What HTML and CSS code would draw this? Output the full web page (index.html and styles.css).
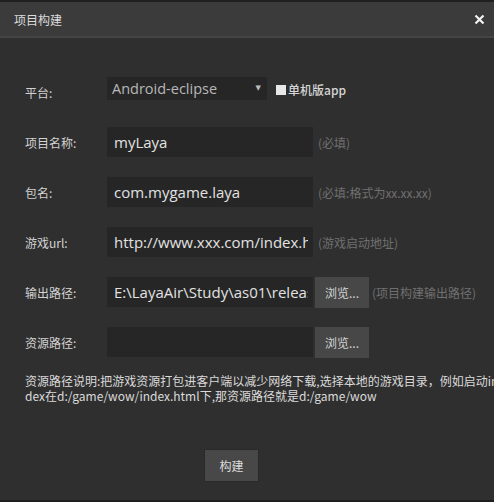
FILE: index.html
```html
<!DOCTYPE html>
<html lang="zh">
<head>
<meta charset="utf-8">
<link rel="stylesheet" href="styles.css">
</head>
<body>
<div class="dialog">
  <div class="titlebar">
    <span class="title">项目构建</span>
    <svg class="close" width="11" height="11" viewBox="0 0 11 11"><path d="M1.5 1.5 L9.5 9.5 M9.5 1.5 L1.5 9.5" stroke="#f2f2f2" stroke-width="2.2" fill="none"/></svg>
  </div>
  <div class="content">
    <div class="row">
      <label class="label">平台:</label>
      <div class="select">Android-eclipse<span class="arrow">▼</span></div>
      <div class="check"><span class="box"></span>单机版app</div>
    </div>
    <div class="row">
      <label class="label">项目名称:</label>
      <div class="input"><span class="val">myLaya</span></div>
      <span class="hint">(必填)</span>
    </div>
    <div class="row">
      <label class="label">包名:</label>
      <div class="input"><span class="val">com.mygame.laya</span></div>
      <span class="hint">(必填:格式为xx.xx.xx)</span>
    </div>
    <div class="row">
      <label class="label">游戏url:</label>
      <div class="input"><span class="val">http://www.xxx.com/index.html</span></div>
      <span class="hint">(游戏启动地址)</span>
    </div>
    <div class="row">
      <label class="label">输出路径:</label>
      <div class="input"><span class="val">E:\LayaAir\Study\as01\release</span></div>
      <button class="browse">浏览...</button>
      <span class="hint hint-after">(项目构建输出路径)</span>
    </div>
    <div class="row">
      <label class="label">资源路径:</label>
      <div class="input"><span class="val"></span></div>
      <button class="browse">浏览...</button>
    </div>
    <p class="desc">资源路径说明:把游戏资源打包进客户端以减少网络下载,选择本地的游戏目录，例如启动in<br>dex在d:/game/wow/index.html下,那资源路径就是d:/game/wow</p>
    <div class="actions">
      <button class="build">构建</button>
    </div>
  </div>
</div>
</body>
</html>
```

FILE: styles.css
```css
html, body {
  margin: 0;
  padding: 0;
  background: #2f2f2f;
  overflow: hidden;
}
body {
  width: 494px;
  height: 502px;
  font-family: "Open Sans", "Noto Sans CJK SC", sans-serif;
}
.dialog {
  width: 494px;
  height: 502px;
  box-sizing: border-box;
  border-top: 2px solid #1f1f1f;
  border-bottom: 2px solid #1e1e1e;
  background: #2f2f2f;
  overflow: hidden;
}
.titlebar {
  height: 34px;
  background: #3b3b3b;
  border-bottom: 2px solid #444444;
  display: flex;
  align-items: center;
  justify-content: space-between;
  padding: 0 9px 0 14px;
}
.title {
  font-family: "Noto Sans CJK SC", sans-serif;
  font-size: 12px;
  color: #dcdcdc;
}
.close {
  display: block;
}
.content {
  padding: 39px 0 0 25px;
}
.row {
  display: flex;
  align-items: center;
  height: 30px;
  margin-bottom: 20px;
}
.row:first-child {
  align-items: flex-start;
}
.row:first-child .label {
  line-height: 32px;
}
.label {
  width: 82px;
  flex: none;
  font-family: "Noto Sans CJK SC", sans-serif;
  font-size: 12px;
  color: #d2d2d2;
}
.select {
  width: 160px;
  height: 23px;
  box-sizing: border-box;
  background: #262626;
  color: #b8b8b8;
  font-size: 14.5px;
  line-height: 23px;
  padding-left: 5px;
  position: relative;
  flex: none;
}
.arrow {
  position: absolute;
  right: 6px;
  top: 0;
  font-family: "DejaVu Sans", sans-serif;
  font-size: 7px;
  color: #bdbdbd;
}
.check {
  margin-left: 9px;
  margin-top: 4px;
  display: flex;
  align-items: center;
  font-family: "Noto Sans CJK SC", sans-serif;
  font-size: 12px;
  font-weight: 500;
  color: #d6d6d6;
}
.box {
  width: 10px;
  height: 10px;
  background: #e8e8e8;
  margin-right: 2px;
}
.input {
  width: 206px;
  height: 30px;
  box-sizing: border-box;
  background: #262626;
  color: #e2e2e2;
  font-size: 15px;
  line-height: 30px;
  padding: 0 5px 0 7px;
  flex: none;
}
.val {
  display: block;
  white-space: nowrap;
  overflow: hidden;
}
.hint {
  margin-left: 5px;
  font-family: "Noto Sans CJK SC", sans-serif;
  font-size: 12px;
  color: #6f6f6f;
  white-space: nowrap;
}
.hint-after {
  margin-left: 3px;
}
.browse {
  width: 54px;
  height: 31px;
  margin-left: 2px;
  border: none;
  background: #474747;
  color: #d4d4d4;
  font-family: "Noto Sans CJK SC", sans-serif;
  font-size: 12px;
  padding: 0;
  flex: none;
}
.desc {
  margin: -4px 0 0 0;
  font-family: "Noto Sans CJK SC", sans-serif;
  font-size: 12px;
  line-height: 15px;
  color: #dadada;
  white-space: nowrap;
}
.actions {
  padding: 46px 0 0 179px;
}
.build {
  width: 55px;
  height: 33px;
  border: 1px solid #2a2a2a;
  background: #484848;
  color: #dcdcdc;
  font-family: "Noto Sans CJK SC", sans-serif;
  font-size: 12px;
  padding: 0;
}
```
